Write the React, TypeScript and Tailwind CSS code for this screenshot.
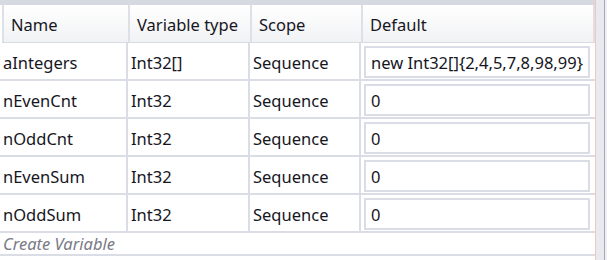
const rows = [
  { name: "aIntegers", type: "Int32[]", scope: "Sequence", value: "new Int32[]{2,4,5,7,8,98,99}" },
  { name: "nEvenCnt", type: "Int32", scope: "Sequence", value: "0" },
  { name: "nOddCnt", type: "Int32", scope: "Sequence", value: "0" },
  { name: "nEvenSum", type: "Int32", scope: "Sequence", value: "0" },
  { name: "nOddSum", type: "Int32", scope: "Sequence", value: "0" },
];

const cols = "grid grid-cols-[128px_122px_111px_232px]";

export default function App() {
  return (
    <div className="flex h-[260px] w-[607px] overflow-hidden bg-white font-['Segoe_UI','Noto_Sans',sans-serif] text-[16.5px] text-[#16161e]">
      <div className="flex w-[595px] flex-col">
        <div className="h-[5px] shrink-0 bg-[#d6d9e2]" />
        <div className={`${cols} ml-[2px] h-[38px] border-b border-[#d8dbe3] bg-gradient-to-b from-white to-[#f1f2f4]`}>
          {["Name", "Variable type", "Scope", "Default"].map((h, i) => (
            <div
              key={h}
              className={`flex items-center border-r-2 border-[#dde0e7] pt-[4px] pl-[7px] ${i === 0 ? "border-l-2" : ""} ${i === 3 ? "border-r-0" : ""}`}
            >
              {h}
            </div>
          ))}
        </div>
        {rows.map((r) => (
          <div key={r.name} className={`${cols} h-[38px] border-b-2 border-[#dadde6]`}>
            <div className="flex items-center border-r-2 border-[#dadde6] pt-[3px] pl-[3px]">{r.name}</div>
            <div className="flex items-center border-r-2 border-[#dadde6] pt-[3px] pl-[3px]">{r.type}</div>
            <div className="flex items-center border-r-2 border-[#dadde6] pt-[3px] pl-[3px]">{r.scope}</div>
            <div className="flex p-[3px]">
              <div className="flex flex-1 items-center border-2 border-[#dadde6] pt-[3px] pl-[5px]">{r.value}</div>
            </div>
          </div>
        ))}
        <div className="flex h-[23px] items-center border-b-2 border-[#dadde6] pt-[2px] pl-[3px] italic text-[#7a7a86]">
          Create Variable
        </div>
      </div>
      <div className="flex w-[12px] shrink-0">
        <div className="w-[1px] bg-[#f0c8b4]" />
        <div className="w-[8px] bg-[#e9e9f0]" />
        <div className="w-[1px] bg-[#a8a8bc]" />
        <div className="flex-1 bg-[#eeeef3]" />
      </div>
    </div>
  );
}
